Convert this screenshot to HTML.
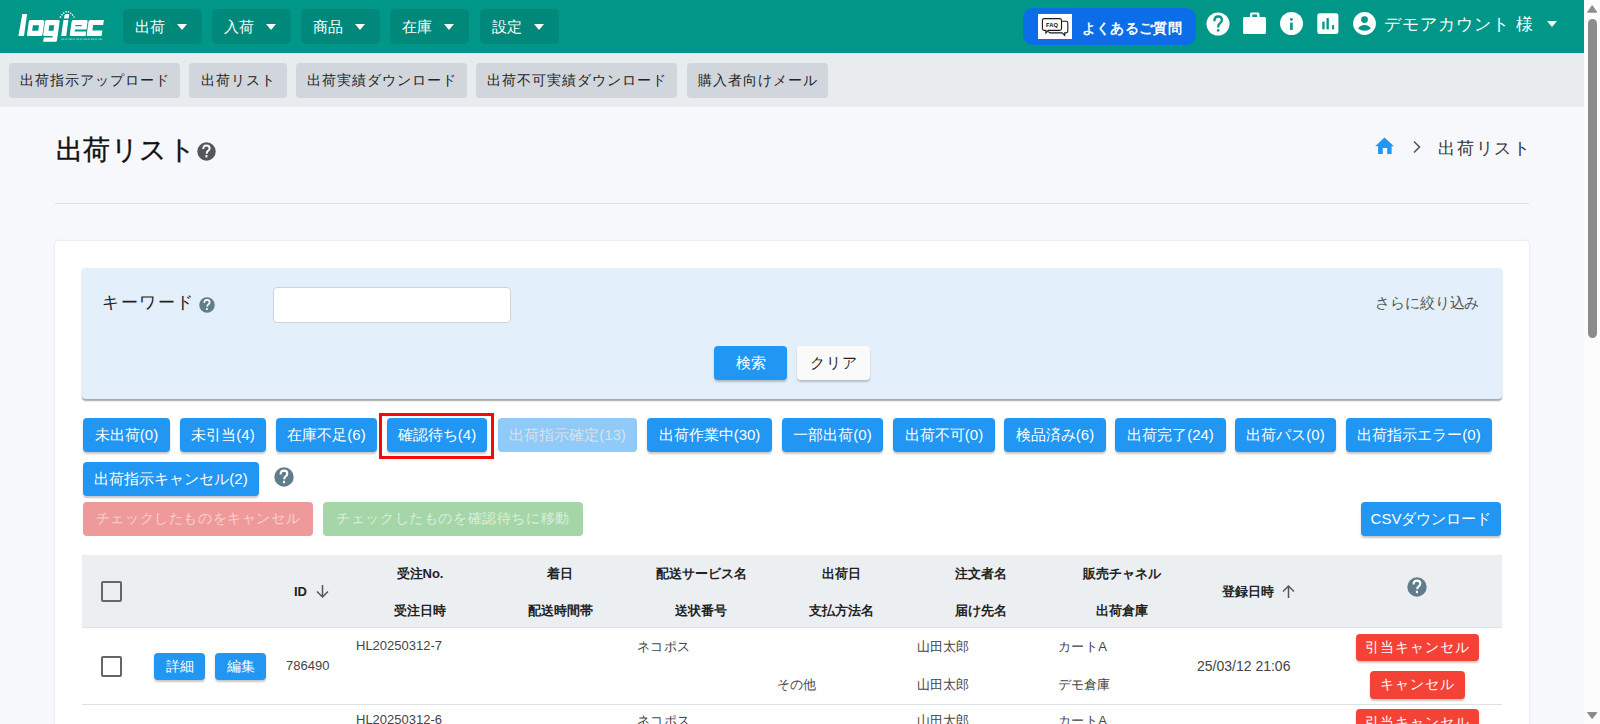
<!DOCTYPE html>
<html lang="ja"><head><meta charset="utf-8">
<style>
*{box-sizing:border-box;margin:0;padding:0}
html,body{width:1600px;height:724px;overflow:hidden}
body{font-family:"Liberation Sans",sans-serif;background:#f7f8fc;position:relative;color:#212121}
.a{position:absolute}
.c{position:absolute;display:flex;align-items:center;justify-content:center;white-space:nowrap}
#hdr{left:0;top:0;width:1584px;height:53px;background:#009688}
.menu{position:absolute;top:9px;height:35px;background:#00897b;border-radius:5px;color:#fff;font-size:15px;line-height:35px;padding-left:12px;white-space:nowrap}
.car{position:absolute;width:0;height:0;border-left:5.5px solid transparent;border-right:5.5px solid transparent;border-top:6px solid #fff}
.menu .car{right:15px;top:15px}
#sub{left:0;top:53px;width:1584px;height:54px;background:#e9ecef}
.sbtn{top:63px;height:35px;background:#d1d6dc;border-radius:4px;font-size:14px;color:#222;letter-spacing:1px}
#scroll{left:1584px;top:0;width:16px;height:724px;background:#fcfcfc}
.bb{background:#2196f3;color:#fff;border-radius:4px;font-size:15px;box-shadow:0 2px 2px rgba(0,0,0,.22)}
.th{font-size:13px;font-weight:bold;color:#222}
.td{font-size:13px;color:#444}
.red{background:#f44336;color:#fff;border-radius:4px;font-size:14px;letter-spacing:1.1px;box-shadow:0 2px 2px rgba(0,0,0,.22)}
</style></head><body>
<div id="hdr" class="a"></div>
<!-- logo -->
<svg class="a" style="left:0;top:0" width="120" height="53" viewBox="0 0 120 53">
 <g fill="#fff" transform="translate(0,36) skewX(-8) translate(0,-36)">
  <path d="M19.2 14 h4.8 v22 h-5.6 z"/>
  <path fill-rule="evenodd" d="M26.8 21.5 q0-1.5 1.5-1.5 h12.5 q1.5 0 1.5 1.5 v13 q0 1.5-1.5 1.5 h-12.5 q-1.5 0-1.5-1.5z M31.4 25.2 v5.5 h6.1 v-5.5z"/>
  <path fill-rule="evenodd" d="M43 21.5 q0-1.5 1.5-1.5 h11.6 q1.5 0 1.5 1.5 v18.7 q0 1.5-1.5 1.5 h-12.2 v-4.3 h8.8 v-1.4 h-8.2 q-1.5 0-1.5-1.5z M47.8 25.2 v5.5 h4.9 v-5.5z"/>
  <rect x="61.2" y="20" width="5" height="16"/>
  <path d="M61.6 18.6 v-3 q0-1.6 1.8-1.6 h2.8 v4.6z"/>
  <path fill-rule="evenodd" d="M69.6 21.5 q0-1.5 1.5-1.5 h13 q1.5 0 1.5 1.5 v8 h-11.6 v2 h11.6 v4.5 h-14.5 q-1.5 0-1.5-1.5z M74 24.9 v1.4 h6.2 v-1.4z"/>
  <path d="M86.5 21.5 q0-1.5 1.5-1.5 h13.6 v4.9 h-10 v5.6 h10 v5.5 h-13.6 q-1.5 0-1.5-1.5z"/>
 </g>
 <path d="M60 17.7 Q67 5.9 74.4 17.5" stroke="#fff" stroke-width="1.5" fill="none" stroke-dasharray="1.3 1.3"/>
 <path d="M61.2 39.1 H102.8" stroke="#fff" stroke-width="1.4" opacity=".45" stroke-dasharray="3 .6 2.5 1.2 4 .6 2 1"/>
</svg>
<div class="menu" style="left:123px;width:79px">出荷<span class="car"></span></div>
<div class="menu" style="left:212px;width:79px">入荷<span class="car"></span></div>
<div class="menu" style="left:301px;width:79px">商品<span class="car"></span></div>
<div class="menu" style="left:390px;width:79px">在庫<span class="car"></span></div>
<div class="menu" style="left:480px;width:79px">設定<span class="car"></span></div>

<!-- FAQ -->
<div class="a" style="left:1023px;top:8px;width:173px;height:37px;background:#0b6de8;border-radius:10px"></div>
<svg class="a" style="left:1038px;top:14px" width="34" height="25" viewBox="0 0 34 25">
 <rect width="34" height="25" fill="#fff"/>
 <path d="M23.5 7.3 h4.5 q1.8 0 1.8 1.8 v8 q0 1.8-1.8 1.8 h-1.3 v2.6 l-2.6-2.6 h-11.5 q-1.6 0-2.1-1.5" fill="none" stroke="#1a1a1a" stroke-width="1.1"/>
 <path d="M6.3 4.6 h15.3 q1.9 0 1.9 1.9 v8 q0 1.9-1.9 1.9 h-11.3 l-2.4 2.6 v-2.6 h-1.6 q-1.9 0-1.9-1.9 v-8 q0-1.9 1.9-1.9z" fill="#fff" stroke="#1a1a1a" stroke-width="1.1"/>
 <text x="14" y="13" font-size="5.8" font-weight="bold" text-anchor="middle" font-family="Liberation Sans" fill="#111">FAQ</text>
</svg>
<div class="a" style="left:1081.5px;top:19.5px;font-size:14px;color:#fff;font-weight:bold;white-space:nowrap;letter-spacing:0.4px">よくあるご質問</div>
<!-- icons -->
<svg class="a" style="left:1206px;top:12px" width="24" height="24" viewBox="0 0 24 24"><circle cx="12" cy="12" r="11.5" fill="#fff"/><path d="M8.4 9.2 q0-4.7 3.7-4.7 q3.8 0 3.8 3.6 q0 2.1-2.1 3.4 q-1.6 1-1.6 3.1 v1" stroke="#009688" stroke-width="2.3" fill="none"/><circle cx="12.2" cy="18.4" r="1.3" fill="#009688"/></svg>
<svg class="a" style="left:1243px;top:12px" width="24" height="24" viewBox="0 0 24 24"><path d="M7 2 q0-1.6 1.6-1.6 h6.3 q1.6 0 1.6 1.6 v3 h5 q1.5 0 1.5 1.5 v14 q0 1.5-1.5 1.5 h-20 q-1.5 0-1.5-1.5 v-14 q0-1.5 1.5-1.5 h5.5z M9.4 2.6 v2.4 h4.7 v-2.4z" fill="#fff" fill-rule="evenodd"/></svg>
<svg class="a" style="left:1280px;top:12px" width="24" height="24" viewBox="0 0 24 24"><circle cx="11.5" cy="11.5" r="11.5" fill="#fff"/><rect x="10.1" y="10.6" width="2.6" height="7.4" fill="#009688"/><circle cx="11.4" cy="7.4" r="1.4" fill="#009688"/></svg>
<svg class="a" style="left:1317px;top:13px" width="22" height="22" viewBox="0 0 22 22"><rect x="0.3" y="0.3" width="21.1" height="20.8" rx="2.3" fill="#fff"/><rect x="5.3" y="8.6" width="2.3" height="7.7" fill="#009688"/><rect x="9.5" y="5" width="2.3" height="11.3" fill="#009688"/><rect x="15" y="12.2" width="2.1" height="4.1" fill="#009688"/></svg>
<svg class="a" style="left:1353px;top:12px" width="24" height="24" viewBox="0 0 24 24"><circle cx="11.5" cy="11.5" r="11.4" fill="#fff"/><circle cx="11.5" cy="7.6" r="3.4" fill="#009688"/><path d="M5.2 16.6 q1.6-3.7 6.3-3.7 q4.7 0 6.3 3.7 q-2.6 2.2-6.3 2.2 q-3.7 0-6.3-2.2z" fill="#009688"/></svg>
<div class="a" style="left:1384px;top:13px;font-size:17px;color:#fff;white-space:nowrap;letter-spacing:1px">デモアカウント 様</div>
<span class="car a" style="left:1547px;top:21px"></span>

<div id="sub" class="a"></div>
<div class="c sbtn" style="left:9px;width:171px">出荷指示アップロード</div>
<div class="c sbtn" style="left:189px;width:98px">出荷リスト</div>
<div class="c sbtn" style="left:296px;width:171px">出荷実績ダウンロード</div>
<div class="c sbtn" style="left:476px;width:201px">出荷不可実績ダウンロード</div>
<div class="c sbtn" style="left:687px;width:141px">購入者向けメール</div>

<!-- title -->
<div class="a" style="left:56px;top:132px;font-size:27px;color:#111;white-space:nowrap;letter-spacing:0.4px;-webkit-text-stroke:.35px #111">出荷リスト</div>
<svg class="a" style="left:197px;top:141.5px" width="19" height="19" viewBox="0 0 20 20"><circle cx="10" cy="10" r="9.7" fill="#53575c"/><path d="M6.6 7.4 q0-3.8 3.4-3.8 q3.3 0 3.3 3 q0 1.8-1.7 2.8 q-1.3.8-1.3 2.4 v.5" stroke="#fff" stroke-width="2.1" fill="none"/><rect x="8.9" y="13.8" width="2.1" height="2.4" fill="#fff"/></svg>
<!-- breadcrumb -->
<svg class="a" style="left:1375px;top:137px" width="20" height="18" viewBox="0 0 20 18"><path d="M9.4 0.6 L19 9.3 H16.6 V17 H12.2 V10.9 H7.8 V17 H3.1 V9.3 H0.2z" fill="#2196f3"/></svg>
<svg class="a" style="left:1412px;top:140px" width="10" height="14" viewBox="0 0 10 14"><path d="M2 1.5 L7.5 7 L2 12.5" stroke="#555" stroke-width="1.6" fill="none"/></svg>
<div class="a" style="left:1438px;top:137px;font-size:17px;color:#333;white-space:nowrap;letter-spacing:1.8px">出荷リスト</div>
<div class="a" style="left:55px;top:203px;width:1474px;height:1px;background:#dde0e4"></div>

<!-- card -->
<div class="a" style="left:55px;top:241px;width:1474px;height:500px;background:#fff;border-radius:4px;box-shadow:0 0 2px rgba(0,0,0,.16)"></div>
<!-- search panel -->
<div class="a" style="left:82px;top:268px;width:1420px;height:131px;background:#e3f0fb;border-radius:4px;box-shadow:0 1.5px 1.5px rgba(0,0,0,.35)"></div>
<div class="a" style="left:102px;top:291px;font-size:17px;color:#222;white-space:nowrap;letter-spacing:1.5px">キーワード</div>
<svg class="a" style="left:199px;top:297.0px" width="16" height="16" viewBox="0 0 20 20"><circle cx="10" cy="10" r="9.7" fill="#607d8b"/><path d="M6.6 7.4 q0-3.8 3.4-3.8 q3.3 0 3.3 3 q0 1.8-1.7 2.8 q-1.3.8-1.3 2.4 v.5" stroke="#fff" stroke-width="2.1" fill="none"/><rect x="8.9" y="13.8" width="2.1" height="2.4" fill="#fff"/></svg>
<div class="a" style="left:273px;top:287px;width:238px;height:36px;background:#fff;border:1px solid #cfd3d7;border-radius:4px"></div>
<div class="a" style="left:1375px;top:294px;font-size:15px;color:#555;white-space:nowrap;letter-spacing:-.1px">さらに絞り込み</div>
<div class="c bb" style="left:714px;top:346px;width:73px;height:34px">検索</div>
<div class="c" style="left:797px;top:346px;width:73px;height:34px;background:#fafafa;border-radius:4px;font-size:15px;color:#222;letter-spacing:1px;box-shadow:0 2px 2px rgba(0,0,0,.2)">クリア</div>

<!-- status buttons -->
<div class="c bb" style="left:83px;top:418px;width:87px;height:34px">未出荷(0)</div>
<div class="c bb" style="left:180px;top:418px;width:86px;height:34px">未引当(4)</div>
<div class="c bb" style="left:276px;top:418px;width:101px;height:34px">在庫不足(6)</div>
<div class="a" style="left:379px;top:413px;width:115px;height:46px;border:3px solid #f50a0a"></div>
<div class="c bb" style="left:387px;top:418px;width:100px;height:34px">確認待ち(4)</div>
<div class="c bb" style="left:498px;top:418px;width:139px;height:34px;background:#90caf9;box-shadow:none;color:#dce1e6">出荷指示確定(13)</div>
<div class="c bb" style="left:647px;top:418px;width:125px;height:34px">出荷作業中(30)</div>
<div class="c bb" style="left:782px;top:418px;width:101px;height:34px">一部出荷(0)</div>
<div class="c bb" style="left:893px;top:418px;width:102px;height:34px">出荷不可(0)</div>
<div class="c bb" style="left:1004px;top:418px;width:102px;height:34px">検品済み(6)</div>
<div class="c bb" style="left:1115px;top:418px;width:111px;height:34px">出荷完了(24)</div>
<div class="c bb" style="left:1235px;top:418px;width:101px;height:34px">出荷パス(0)</div>
<div class="c bb" style="left:1346px;top:418px;width:146px;height:34px">出荷指示エラー(0)</div>
<div class="c bb" style="left:83px;top:462px;width:176px;height:34px">出荷指示キャンセル(2)</div>
<svg class="a" style="left:274px;top:466.5px" width="20" height="20" viewBox="0 0 20 20"><circle cx="10" cy="10" r="9.7" fill="#607d8b"/><path d="M6.6 7.4 q0-3.8 3.4-3.8 q3.3 0 3.3 3 q0 1.8-1.7 2.8 q-1.3.8-1.3 2.4 v.5" stroke="#fff" stroke-width="2.1" fill="none"/><rect x="8.9" y="13.8" width="2.1" height="2.4" fill="#fff"/></svg>
<div class="c" style="left:83px;top:502px;width:230px;height:34px;background:#ef9a9a;border-radius:4px;font-size:14px;color:#f6d0d0;letter-spacing:.6px">チェックしたものをキャンセル</div>
<div class="c" style="left:323px;top:502px;width:260px;height:34px;background:#a5d6a7;border-radius:4px;font-size:14px;color:#dcefdc;letter-spacing:.6px">チェックしたものを確認待ちに移動</div>
<div class="c bb" style="left:1361px;top:502px;width:140px;height:34px">CSVダウンロード</div>

<!-- table header -->
<div class="a" style="left:82px;top:555px;width:1420px;height:73px;background:#eceff2;border-bottom:1px solid #dfe2e5"></div>
<div class="a" style="left:101px;top:581px;width:21px;height:21px;border:2px solid #666;border-radius:2px"></div>
<div class="a th" style="left:294px;top:584px">ID</div>
<svg class="a" style="left:315px;top:584px" width="15" height="15" viewBox="0 0 15 15"><path d="M7.5 1 V13 M2 7.5 L7.5 13 L13 7.5" stroke="#555" stroke-width="1.5" fill="none"/></svg>
<div class="c th" style="left:370px;top:564px;width:100px;height:20px">受注No.</div>
<div class="c th" style="left:370px;top:600.5px;width:100px;height:20px">受注日時</div>
<div class="c th" style="left:510px;top:564px;width:100px;height:20px">着日</div>
<div class="c th" style="left:510px;top:600.5px;width:100px;height:20px">配送時間帯</div>
<div class="c th" style="left:641px;top:564px;width:120px;height:20px">配送サービス名</div>
<div class="c th" style="left:651px;top:600.5px;width:100px;height:20px">送状番号</div>
<div class="c th" style="left:791px;top:564px;width:100px;height:20px">出荷日</div>
<div class="c th" style="left:791px;top:600.5px;width:100px;height:20px">支払方法名</div>
<div class="c th" style="left:931px;top:564px;width:100px;height:20px">注文者名</div>
<div class="c th" style="left:931px;top:600.5px;width:100px;height:20px">届け先名</div>
<div class="c th" style="left:1072px;top:564px;width:100px;height:20px">販売チャネル</div>
<div class="c th" style="left:1072px;top:600.5px;width:100px;height:20px">出荷倉庫</div>
<div class="a th" style="left:1222px;top:583px;white-space:nowrap">登録日時</div>
<svg class="a" style="left:1281px;top:584px" width="15" height="15" viewBox="0 0 15 15"><path d="M7.5 14 V2 M2 7.5 L7.5 2 L13 7.5" stroke="#555" stroke-width="1.5" fill="none"/></svg>
<svg class="a" style="left:1407px;top:577.0px" width="20" height="20" viewBox="0 0 20 20"><circle cx="10" cy="10" r="9.7" fill="#607d8b"/><path d="M6.6 7.4 q0-3.8 3.4-3.8 q3.3 0 3.3 3 q0 1.8-1.7 2.8 q-1.3.8-1.3 2.4 v.5" stroke="#fff" stroke-width="2.1" fill="none"/><rect x="8.9" y="13.8" width="2.1" height="2.4" fill="#fff"/></svg>

<!-- row 1 -->
<div class="a" style="left:101px;top:656px;width:21px;height:21px;border:2px solid #666;border-radius:2px"></div>
<div class="c bb" style="left:154px;top:653px;width:51px;height:27px;font-size:14px">詳細</div>
<div class="c bb" style="left:215px;top:653px;width:51px;height:27px;font-size:14px">編集</div>
<div class="a td" style="left:286px;top:658px">786490</div>
<div class="a td" style="left:356px;top:638px">HL20250312-7</div>
<div class="a td" style="left:637px;top:638px;letter-spacing:.3px">ネコポス</div>
<div class="a td" style="left:777px;top:676px">その他</div>
<div class="a td" style="left:917px;top:638px">山田太郎</div>
<div class="a td" style="left:917px;top:676px">山田太郎</div>
<div class="a td" style="left:1058px;top:638px;letter-spacing:.4px">カートA</div>
<div class="a td" style="left:1058px;top:676px">デモ倉庫</div>
<div class="a td" style="left:1197px;top:658px;font-size:14px">25/03/12 21:06</div>
<div class="c red" style="left:1356px;top:634px;width:123px;height:27px">引当キャンセル</div>
<div class="c red" style="left:1370px;top:671px;width:95px;height:28px">キャンセル</div>
<div class="a" style="left:82px;top:704px;width:1420px;height:1px;background:#dfe2e5"></div>
<!-- row 2 -->
<div class="a td" style="left:356px;top:712px">HL20250312-6</div>
<div class="a td" style="left:637px;top:712px;letter-spacing:.3px">ネコポス</div>
<div class="a td" style="left:917px;top:712px">山田太郎</div>
<div class="a td" style="left:1058px;top:712px;letter-spacing:.4px">カートA</div>
<div class="c red" style="left:1356px;top:709px;width:123px;height:27px">引当キャンセル</div>

<!-- scrollbar -->
<div id="scroll" class="a"></div>
<div class="a" style="left:1587.6px;top:19px;width:9.4px;height:319px;background:#8c8c8c;border-radius:5px"></div>
<svg class="a" style="left:1586px;top:4px" width="12" height="10" viewBox="0 0 12 10"><path d="M6.2 1.6 L10.8 8.2 H1.6z" fill="#8e8e8e" stroke="#8e8e8e" stroke-width="1" stroke-linejoin="round"/></svg>
<svg class="a" style="left:1586px;top:710px" width="12" height="10" viewBox="0 0 12 10"><path d="M1.6 2.6 H10.8 L6.2 8.6z" fill="#8a8a8a" stroke="#8a8a8a" stroke-width="1" stroke-linejoin="round"/></svg>
</body></html>
